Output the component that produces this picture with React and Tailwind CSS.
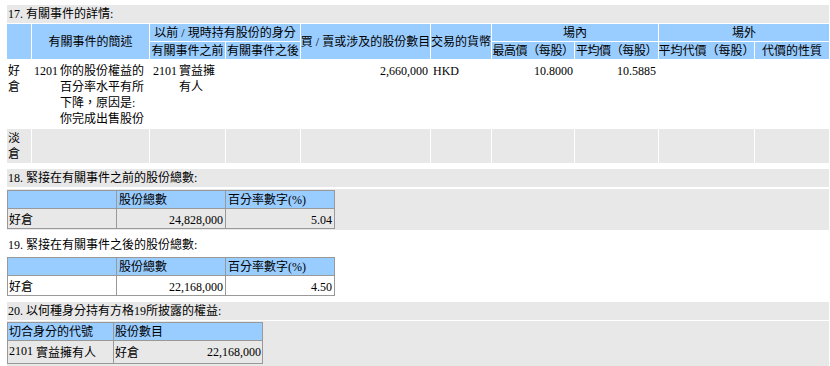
const FONT = "font-['Liberation_Serif','Noto_Sans_CJK_TC',serif]";

function Band({ children, gray = true, className = "" }) {
  return (
    <div
      className={`flex h-[18px] items-center pl-px ${gray ? "bg-[#e8e8e8]" : ""} ${className}`}
    >
      {children}
    </div>
  );
}

function EventTable() {
  const head = "flex items-center justify-center whitespace-nowrap bg-[#99ccff]";
  const cell = "bg-white pt-[3px]";
  const blank = "bg-[#e8e8e8]";
  return (
    <div className="grid grid-cols-[24px_117px_75px_74px_129px_60px_82px_83px_95px_74px] grid-rows-[17px_17px_68px_34px] gap-px bg-white">
      <div className={`${head} row-span-2`} />
      <div className={`${head} row-span-2`}>有關事件的簡述</div>
      <div className={`${head} col-span-2`}>以前 / 現時持有股份的身分</div>
      <div className={`${head} row-span-2`}>買 / 賣或涉及的股份數目</div>
      <div className={`${head} row-span-2`}>交易的貨幣</div>
      <div className={`${head} col-span-2`}>場內</div>
      <div className={`${head} col-span-2`}>場外</div>
      <div className={head}>有關事件之前</div>
      <div className={head}>有關事件之後</div>
      <div className={`${head} tracking-[-0.4px]`}>最高價（每股）</div>
      <div className={`${head} tracking-[-0.4px]`}>平均價（每股）</div>
      <div className={head}>平均代價（每股）</div>
      <div className={head}>代價的性質</div>

      <div className={`${cell} pl-px`}>
        好<br />倉
      </div>
      <div className={`${cell} flex pl-[2px]`}>
        <span className="w-[26px] shrink-0">1201</span>
        <span>
          你的股份權益的
          <br />
          百分率水平有所
          <br />
          下降，原因是:
          <br />
          你完成出售股份
        </span>
      </div>
      <div className={`${cell} flex pl-[3px]`}>
        <span className="w-[26px] shrink-0">2101</span>
        <span>
          實益擁
          <br />
          有人
        </span>
      </div>
      <div className={cell} />
      <div className={`${cell} pr-[2px] text-right`}>2,660,000</div>
      <div className={`${cell} pl-[2px]`}>HKD</div>
      <div className={`${cell} pr-px text-right`}>10.8000</div>
      <div className={`${cell} pr-[2px] text-right`}>10.5885</div>
      <div className={cell} />
      <div className={cell} />

      <div className={`${blank} pl-px pt-px`}>
        淡<br />倉
      </div>
      <div className={blank} />
      <div className={blank} />
      <div className={blank} />
      <div className={blank} />
      <div className={blank} />
      <div className={blank} />
      <div className={blank} />
      <div className={blank} />
      <div className={blank} />
    </div>
  );
}

function ShareTable({ total, pct }) {
  const c = "flex items-center border-b border-r border-[#999] px-[2px]";
  return (
    <div className="grid w-[328px] grid-cols-[109px_109px_109px] grid-rows-[18px_20px] border-l border-t border-[#999]">
      <div className={`${c} bg-[#99ccff]`} />
      <div className={`${c} bg-[#99ccff]`}>股份總數</div>
      <div className={`${c} bg-[#99ccff]`}>百分率數字(%)</div>
      <div className={`${c} pl-px pt-[2px]`}>好倉</div>
      <div className={`${c} justify-end pt-[2px]`}>{total}</div>
      <div className={`${c} justify-end pt-[2px]`}>{pct}</div>
    </div>
  );
}

function CapacityTable() {
  const c = "flex items-center border-b border-r border-[#999] px-px";
  return (
    <div className="grid w-[256px] grid-cols-[106px_149px] grid-rows-[18px_23px] border-l border-t border-[#999]">
      <div className={`${c} bg-[#99ccff]`}>切合身分的代號</div>
      <div className={`${c} bg-[#99ccff]`}>股份數目</div>
      <div className={c}>
        <span className="mb-[3px] w-[27px] shrink-0">2101</span>
        <span className="mt-px">實益擁有人</span>
      </div>
      <div className={`${c} justify-between pr-px`}>
        <span className="mt-px">好倉</span>
        <span className="mb-px">22,168,000</span>
      </div>
    </div>
  );
}

export default function App() {
  return (
    <div className={`${FONT} h-[366px] w-[830px] overflow-hidden bg-white text-[12px] leading-[16px] text-black`}>
      <div className="ml-[7px] flex w-[822px] flex-col pt-[5px]">
        <Band className="mb-px">17. 有關事件的詳情:</Band>
        <EventTable />

        <Band className="mt-[6px]">18. 緊接在有關事件之前的股份總數:</Band>
        <div className="mt-[2px] bg-[#e8e8e8] py-px">
          <ShareTable total="24,828,000" pct="5.04" />
        </div>

        <Band gray={false} className="mt-[6px]">
          19. 緊接在有關事件之後的股份總數:
        </Band>
        <div className="mt-[2px] py-px">
          <ShareTable total="22,168,000" pct="4.50" />
        </div>

        <Band className="mt-[5px]">20. 以何種身分持有方格19所披露的權益:</Band>
        <div className="mt-px bg-[#e8e8e8] pb-[2px] pt-px">
          <CapacityTable />
        </div>
      </div>
    </div>
  );
}
